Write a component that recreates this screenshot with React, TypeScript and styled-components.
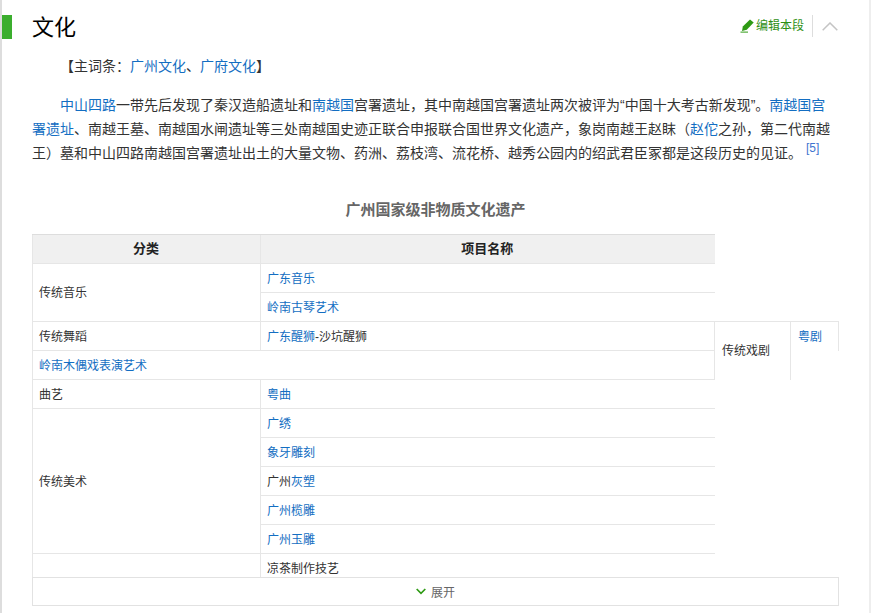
import React from "react";
import styled, { createGlobalStyle } from "styled-components";

const GlobalStyle = createGlobalStyle`
  html, body {
    margin: 0;
    padding: 0;
    background: #fff;
  }
  body {
    font-family: "Liberation Sans", "Noto Sans CJK SC", sans-serif;
    font-size: 14px;
    color: #333;
  }
`;

const Page = styled.div`
  width: 871px;
  height: 613px;
  box-sizing: border-box;
  border-left: 2px solid #ddd;
  border-right: 2px solid #eee;
  overflow: hidden;
  padding-top: 15px;
`;

const TitleRow = styled.div`
  display: flex;
  align-items: flex-start;
  height: 24px;
  width: 836px;
`;

const TitleBar = styled.span`
  width: 10px;
  height: 24px;
  background: #3bae2e;
  margin-right: 20px;
`;

const Title = styled.h2`
  margin: 0;
  padding-top: 1px;
  flex: 1;
  font-size: 22px;
  font-weight: 400;
  line-height: 24px;
  color: #000;
`;

const Actions = styled.div`
  display: flex;
  align-items: center;
  height: 22px;
`;

const EditLink = styled.a`
  display: flex;
  align-items: center;
  gap: 2px;
  font-size: 12px;
  line-height: 20px;
  color: #2e8f14;
`;

const Divider = styled.span`
  width: 1px;
  height: 22px;
  background: #ddd;
  margin: 0 9px 0 8px;
`;

const Content = styled.div`
  margin-left: 30px;
  width: 807px;
`;

const Paragraph = styled.p<{ $top: number }>`
  margin: ${({ $top }) => $top}px 0 0;
  line-height: 24px;
  text-indent: 28px;
`;

const Link = styled.a`
  color: #136ec2;
`;

const Sup = styled.sup`
  font-size: 12px;
  line-height: 0;
  color: #3f74d0;
  margin-left: 4px;
  vertical-align: 6px;
`;

const Caption = styled.div`
  margin-top: 35px;
  margin-bottom: 14px;
  font-size: 15px;
  font-weight: 700;
  line-height: 20px;
  color: #666;
  text-align: center;
`;

const TableClip = styled.div`
  height: 343px;
  overflow: hidden;
`;

const Table = styled.table`
  width: 806px;
  table-layout: fixed;
  border-collapse: collapse;
  font-size: 12px;
  line-height: 18px;
`;

const Row = styled.tr`
  height: 29px;
`;

const HeadCell = styled.th`
  padding: 0 8px 0 7px;
  background: #f0f0f0;
  border: 1px solid #e6e6e6;
  border-top-color: #ddd;
  border-right: 0;
  font-size: 13px;
  font-weight: 700;
  color: #222;
`;

const Cell = styled.td<{ $open?: boolean; $closedRight?: boolean }>`
  padding: 1px 6px 0 ${({ $closedRight }) => ($closedRight ? "7px" : "6px")};
  border-top: 1px solid #e6e6e6;
  border-left: 1px solid #e6e6e6;
  border-bottom: ${({ $open }) => ($open ? "0" : "1px solid #e6e6e6")};
  border-right: ${({ $closedRight }) => ($closedRight ? "1px solid #e6e6e6" : "0")};
`;

const ExpandBar = styled.div`
  height: 29px;
  box-sizing: border-box;
  display: flex;
  align-items: center;
  justify-content: center;
  gap: 5px;
  border: 1px solid #e2e2e2;
  font-size: 12px;
  color: #666;
`;

const PencilIcon = () => (
  <svg width="14" height="14" viewBox="0 0 14 14">
    <path d="M10 0.5 L13.7 3.6 L6.8 10.8 L2 12 L2.8 7.6 Z" fill="#2e9a14" />
    <path d="M0.5 12.6 H8 V13.6 H0.5 Z" fill="#2e9a14" />
  </svg>
);

const ChevronUp = () => (
  <svg width="16" height="9" viewBox="0 0 16 9">
    <path d="M0.7 8.3 L8 1 L15.3 8.3" fill="none" stroke="#c4c4c4" strokeWidth="1.5" />
  </svg>
);

const ChevronDown = () => (
  <svg width="10" height="7" viewBox="0 0 10 7">
    <path d="M0.7 1 L5 5.3 L9.3 1" fill="none" stroke="#2e9a14" strokeWidth="1.7" />
  </svg>
);

export default function App() {
  return (
    <Page>
      <GlobalStyle />
      <TitleRow>
        <TitleBar />
        <Title>文化</Title>
        <Actions>
          <EditLink>
            <PencilIcon />
            编辑本段
          </EditLink>
          <Divider />
          <ChevronUp />
        </Actions>
      </TitleRow>
      <Content>
        <Paragraph $top={15}>
          【主词条：<Link>广州文化</Link>、<Link>广府文化</Link>】
        </Paragraph>
        <Paragraph $top={15}>
          <Link>中山四路</Link>一带先后发现了秦汉造船遗址和<Link>南越国</Link>宫署遗址，其中南越国宫署遗址两次被评为“中国十大考古新发现”。<Link>南越国宫署遗址</Link>、南越王墓、南越国水闸遗址等三处南越国史迹正联合申报联合国世界文化遗产，象岗南越王赵眜（<Link>赵佗</Link>之孙，第二代南越王）墓和中山四路南越国宫署遗址出土的大量文物、药洲、荔枝湾、流花桥、越秀公园内的绍武君臣冢都是这段历史的见证。
          <Sup>[5]</Sup>
        </Paragraph>
        <Caption>广州国家级非物质文化遗产</Caption>
        <TableClip>
          <Table>
            <colgroup>
              <col style={{ width: 228 }} />
              <col style={{ width: 454 }} />
              <col style={{ width: 76 }} />
              <col style={{ width: 48 }} />
            </colgroup>
            <tbody>
              <Row>
                <HeadCell>分类</HeadCell>
                <HeadCell>项目名称</HeadCell>
              </Row>
              <Row>
                <Cell rowSpan={2}>传统音乐</Cell>
                <Cell>
                  <Link>广东音乐</Link>
                </Cell>
              </Row>
              <Row>
                <Cell>
                  <Link>岭南古琴艺术</Link>
                </Cell>
              </Row>
              <Row>
                <Cell>传统舞蹈</Cell>
                <Cell $open>
                  <Link>广东醒狮</Link>-沙坑醒狮
                </Cell>
                <Cell rowSpan={2} $open $closedRight>
                  传统戏剧
                </Cell>
                <Cell $open $closedRight>
                  <Link>粤剧</Link>
                </Cell>
              </Row>
              <Row>
                <Cell colSpan={2}>
                  <Link>岭南木偶戏表演艺术</Link>
                </Cell>
              </Row>
              <Row>
                <Cell>曲艺</Cell>
                <Cell>
                  <Link>粤曲</Link>
                </Cell>
              </Row>
              <Row>
                <Cell rowSpan={5}>传统美术</Cell>
                <Cell>
                  <Link>广绣</Link>
                </Cell>
              </Row>
              <Row>
                <Cell>
                  <Link>象牙雕刻</Link>
                </Cell>
              </Row>
              <Row>
                <Cell>
                  广州<Link>灰塑</Link>
                </Cell>
              </Row>
              <Row>
                <Cell>
                  <Link>广州榄雕</Link>
                </Cell>
              </Row>
              <Row>
                <Cell>
                  <Link>广州玉雕</Link>
                </Cell>
              </Row>
              <Row>
                <Cell />
                <Cell>凉茶制作技艺</Cell>
              </Row>
            </tbody>
          </Table>
        </TableClip>
        <ExpandBar>
          <ChevronDown />
          展开
        </ExpandBar>
      </Content>
    </Page>
  );
}
